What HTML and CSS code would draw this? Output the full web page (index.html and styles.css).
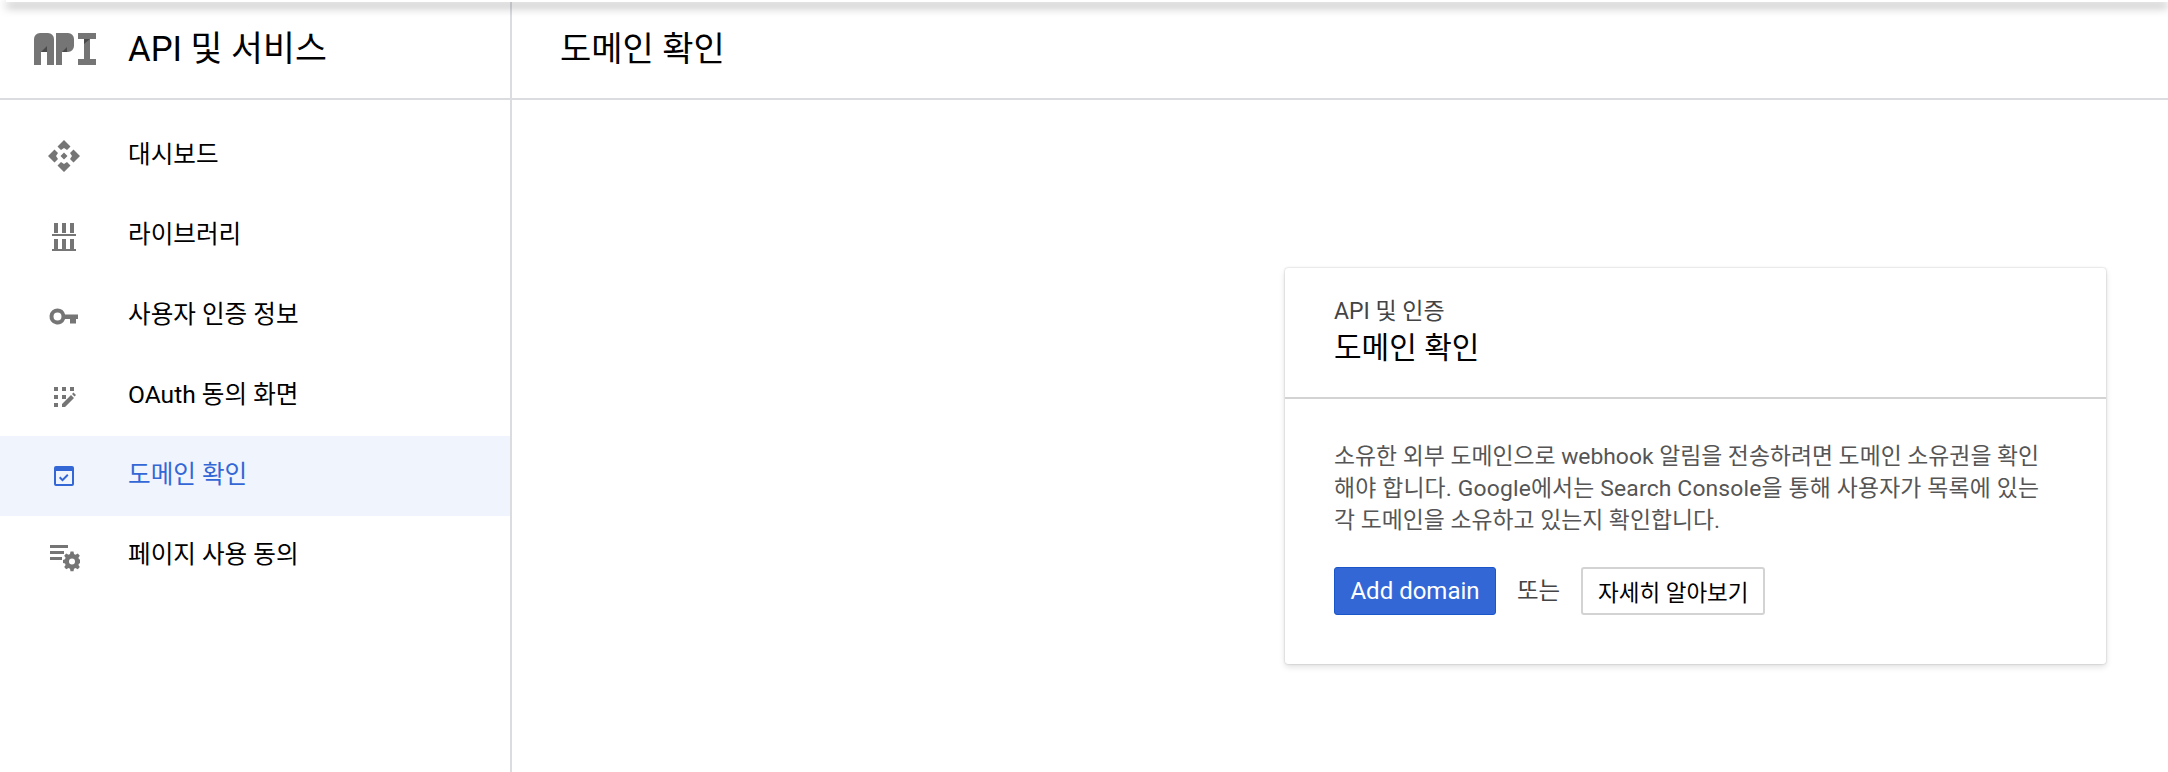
FILE: index.html
```html
<!DOCTYPE html>
<html lang="ko">
<head>
<meta charset="utf-8">
<title>도메인 확인</title>
<link rel="stylesheet" href="styles.css">
</head>
<body>
<div class="topshadow"></div>
<div class="app">
  <aside class="sidebar">
    <div class="brand">
      <svg class="logo" viewBox="0 0 62 32" role="img" aria-label="API 로고">
        <path class="logo-fill" d="M0 32V6a6 6 0 0 1 6-6h8a6 6 0 0 1 6 6v26h-7V19H7v13z"/>
        <path class="logo-dark" d="M7 19l6-6v6z"/>
        <path class="logo-fill" d="M22 32V0h12a6 6 0 0 1 6 6v7a6 6 0 0 1-6 6h-6v13z"/>
        <path class="logo-dark" d="M28 19l5-5v5z"/>
        <path class="logo-fill" d="M44 0h18v6h-6v20h6v6H44v-6h6V6h-6z"/>
        <path class="logo-dark" d="M50 6h6l-6 5z"/>
      </svg>
      <span class="brand-name">API 및 서비스</span>
    </div>
    <nav class="nav">
      <a class="nav-item">
        <svg class="nav-icon" viewBox="0 0 32 32"><path d="M16 0l6.500 6.500L19 10l-3-2-3 2-3.500-3.500zM16 32l-6.500-6.500L13 22l3 2 3-2 3.500 3.500zM0 16l6.500-6.500L10 13l-2 3 2 3-3.500 3.500zM32 16l-6.500 6.500L22 19l2-3-2-3 3.500-3.500zM16 12.500l3.500 3.500-3.500 3.500-3.500-3.500z"/></svg>
        <span class="nav-label">대시보드</span>
      </a>
      <a class="nav-item">
        <svg class="nav-icon" viewBox="0 0 32 32"><path d="M6 3h4v10H6zM14 3h4v10h-4zM22 3h4v10h-4zM4 14h24v2H4zM6 19h4v10H6zM14 19h4v10h-4zM22 19h4v10h-4zM4 29h24v2H4z"/></svg>
        <span class="nav-label">라이브러리</span>
      </a>
      <a class="nav-item">
        <svg class="nav-icon" viewBox="0 0 32 32"><path fill-rule="evenodd" d="M9.500 8.500a8 8 0 0 1 7.600 6H30v4.500h-2v4.500h-6V19h-4.900a8 8 0 1 1-7.600-10.500zM9.500 12.500a4 4 0 1 0 0 8 4 4 0 0 0 0-8z"/></svg>
        <span class="nav-label">사용자 인증 정보</span>
      </a>
      <a class="nav-item">
        <svg class="nav-icon" viewBox="0 0 32 32"><path d="M6 7h4v4H6zM14 7h4v4h-4zM22 7h4v4h-4zM6 15h4v4H6zM14 15h4v4h-4zM6 23h4v4H6zM14 27v-3l9-9 3 3-9 9zM24 14l1.500-1.500 2.500 2.500-1.500 1.500z"/></svg>
        <span class="nav-label">OAuth 동의 화면</span>
      </a>
      <a class="nav-item active">
        <svg class="nav-icon" viewBox="0 0 32 32"><path fill-rule="evenodd" d="M8 6h16a2 2 0 0 1 2 2v16a2 2 0 0 1-2 2H8a2 2 0 0 1-2-2V8a2 2 0 0 1 2-2zM8 11v13h16V11zM11 18l1.400-1.400 2.100 2.100 4.600-4.600 1.400 1.400-6 6z"/></svg>
        <span class="nav-label">도메인 확인</span>
      </a>
      <a class="nav-item">
        <svg class="nav-icon" viewBox="0 0 32 32"><path d="M2 5h18v3H2zM2 11h14v3H2zM2 17h12v3H2z"/><path fill-rule="evenodd" d="M22.500 11.500h3l.5 2.500 1.500.7 2.300-1.200 2 2.200-1.400 2 .6 1.600 2 .6v3l-2 .6-.6 1.600 1.400 2-2 2.200-2.300-1.200-1.500.7-.5 2.500h-3l-.5-2.500-1.500-.7-2.300 1.200-2-2.200 1.400-2-.6-1.600-2-.6v-3l2-.6.600-1.600-1.400-2 2-2.200 2.300 1.200 1.500-.7zM24 18.500a3 3 0 1 0 0 6 3 3 0 0 0 0-6z"/></svg>
        <span class="nav-label">페이지 사용 동의</span>
      </a>
    </nav>
  </aside>
  <div class="content">
    <header class="page-head"><h1>도메인 확인</h1></header>
    <main class="main">
      <section class="card">
        <div class="card-head">
          <div class="eyebrow">API 및 인증</div>
          <h2>도메인 확인</h2>
        </div>
        <div class="card-body">
          <p>소유한 외부 도메인으로 webhook 알림을 전송하려면 도메인 소유권을 확인<br><span class="line-wide">해야 합니다. Google에서는 Search Console을 통해 사용자가 목록에 있는</span><br>각 도메인을 소유하고 있는지 확인합니다.</p>
          <div class="actions">
            <button class="btn primary">Add domain</button>
            <span class="or">또는</span>
            <button class="btn secondary">자세히 알아보기</button>
          </div>
        </div>
      </section>
    </main>
  </div>
</div>
</body>
</html>
```
FILE: styles.css
```css
* { box-sizing: border-box; }
html, body { margin: 0; height: 100%; background: #fff; overflow: hidden; }
body { font-family: Roboto, "Noto Sans CJK KR", sans-serif; color: #000; }
.topshadow { position: absolute; left: 6px; right: 0; top: 0; height: 2px; background: #fff; box-shadow: 0 4px 10px rgba(0,0,0,.75); z-index: 2; }
.app { display: flex; height: 772px; }
.sidebar { width: 512px; flex: none; border-right: 2px solid #dadce0; }
.brand { height: 100px; border-bottom: 2px solid #dadce0; display: flex; align-items: center; padding-left: 34px; }
.logo { width: 62px; height: 32px; flex: none; }
.logo-fill { fill: #757575; }
.logo-dark { fill: #4a4a4a; }
.brand-name { margin-left: 32px; font-size: 34.700px; padding-bottom: 6px; }
.nav { padding-top: 16px; }
.nav-item { height: 80px; display: flex; align-items: center; padding-left: 48px; font-size: 24.600px; color: #000; }
.nav-label { padding-bottom: 8px; }
.nav-icon { width: 32px; height: 32px; flex: none; margin-right: 48px; fill: #757575; }
.nav-item.active { background: #f0f4fd; color: #3367d6; }
.nav-item.active .nav-icon { fill: #3367d6; }
.content { flex: 1; display: flex; flex-direction: column; }
.page-head { height: 100px; border-bottom: 2px solid #dadce0; display: flex; align-items: center; padding-left: 48px; }
.page-head h1 { margin: 0; font-size: 34px; font-weight: 400; padding-bottom: 6px; }
.main { flex: 1; display: flex; justify-content: flex-end; align-items: flex-start; padding: 168px 62px 0 0; }
.card { width: 821px; height: 396px; background: #fff; border-radius: 3px; box-shadow: 0 0 2px rgba(0,0,0,.25), 0 3px 6px rgba(0,0,0,.12); }
.card-head { height: 131px; border-bottom: 2px solid #d3d3d3; padding: 29px 49px 0; }
.eyebrow { font-size: 23px; line-height: 30px; color: #444; }
.card-head h2 { margin: 1px 0 0; font-size: 30px; line-height: 40px; font-weight: 400; }
.card-body { padding: 42px 49px 0; }
.card-body p { margin: 0; font-size: 22.850px; line-height: 32px; color: #555; white-space: nowrap; }
.line-wide { letter-spacing: .17px; }
.actions { display: flex; align-items: center; margin-top: 30px; }
.btn { height: 48px; font: inherit; border-radius: 3px; padding: 0; }
.primary { width: 162px; font-size: 24px; background: #3367d6; border: 1px solid #1a56c9; color: #fff; }
.or { margin: 0 21px; font-size: 23.500px; color: #444; padding-bottom: 4px; }
.secondary { width: 184px; font-size: 22.500px; background: #fff; border: 2px solid #d3d3d3; color: #000; }
```
